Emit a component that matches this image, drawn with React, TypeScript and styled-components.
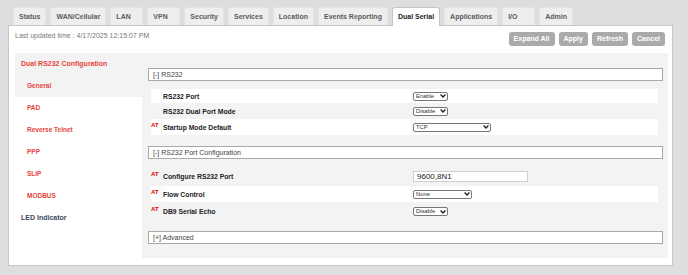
import styled, { createGlobalStyle } from "styled-components";

const GlobalStyle = createGlobalStyle`
  body {
    margin: 0;
    background: #dedede;
    font-family: "Liberation Sans", Arial, sans-serif;
  }
`;

const tabs = [
  "Status",
  "WAN/Cellular",
  "LAN",
  "VPN",
  "Security",
  "Services",
  "Location",
  "Events Reporting",
  "Dual Serial",
  "Applications",
  "I/O",
  "Admin",
];

const navItems = ["General", "PAD", "Reverse Telnet", "PPP", "SLIP", "MODBUS"];

function Chevron() {
  return (
    <svg width="6" height="4" viewBox="0 0 6 4">
      <path d="M0.6 0.6 L3 3 L5.4 0.6" fill="none" stroke="#222" strokeWidth="1.4" />
    </svg>
  );
}

function Dropdown({ value, width }: { value: string; width: number }) {
  return (
    <SelectWrap>
      <SelectBox $width={width} defaultValue={value}>
        <option>{value}</option>
      </SelectBox>
      <ChevronSpot>
        <Chevron />
      </ChevronSpot>
    </SelectWrap>
  );
}

interface RowProps {
  at?: boolean;
  label: string;
  striped?: boolean;
  height: number;
  children: React.ReactNode;
}

function Row({ at, label, striped, height, children }: RowProps) {
  return (
    <RowGrid $height={height}>
      <Cell $striped={striped}>{at && <AtMark>AT</AtMark>}</Cell>
      <LabelCell $striped={striped}>{label}</LabelCell>
      <ValueCell $striped={striped}>{children}</ValueCell>
    </RowGrid>
  );
}

function App() {
  return (
    <Page>
      <GlobalStyle />
      <TabBar>
        {tabs.map((t) => (
          <Tab key={t} $active={t === "Dual Serial"}>
            {t}
          </Tab>
        ))}
      </TabBar>
      <Panel>
        <PanelHeader>
          <Updated>Last updated time : 4/17/2025 12:15:07 PM</Updated>
          <Buttons>
            <Button>Expand All</Button>
            <Button>Apply</Button>
            <Button>Refresh</Button>
            <Button>Cancel</Button>
          </Buttons>
        </PanelHeader>
        <Body>
          <Nav>
            <NavHeader>Dual RS232 Configuration</NavHeader>
            {navItems.map((n) => (
              <NavItem key={n} $active={n === "General"}>
                {n}
              </NavItem>
            ))}
            <NavGroup>LED Indicator</NavGroup>
          </Nav>
          <Content>
            <Section>
              <SectionTitle>[-] RS232</SectionTitle>
              <Rows>
                <Row label="RS232 Port" striped height={14}>
                  <Dropdown value="Enable" width={35} />
                </Row>
                <Row label="RS232 Dual Port Mode" height={14}>
                  <Dropdown value="Disable" width={35} />
                </Row>
                <Row at label="Startup Mode Default" striped height={16}>
                  <Dropdown value="TCP" width={78} />
                </Row>
              </Rows>
            </Section>
            <Section>
              <SectionTitle>[-] RS232 Port Configuration</SectionTitle>
              <Rows $top={9}>
                <Row at label="Configure RS232 Port" height={17}>
                  <TextInput defaultValue="9600,8N1" />
                </Row>
                <Row at label="Flow Control" striped height={16}>
                  <Dropdown value="None" width={59} />
                </Row>
                <Row at label="DB9 Serial Echo" height={17}>
                  <Dropdown value="Disable" width={35} />
                </Row>
              </Rows>
            </Section>
            <SectionTitle>[+] Advanced</SectionTitle>
          </Content>
        </Body>
      </Panel>
    </Page>
  );
}

const Page = styled.div`
  padding: 7px 0 0 8px;
  width: 665px;
`;

const TabBar = styled.div`
  display: flex;
  align-items: flex-end;
  gap: 4px;
  height: 18px;
  padding-left: 5px;
  position: relative;
  z-index: 1;
`;

const Tab = styled.div<{ $active?: boolean }>`
  box-sizing: border-box;
  min-width: 33px;
  height: ${({ $active }) => ($active ? "19px" : "18px")};
  margin-bottom: ${({ $active }) => ($active ? "-1px" : "0")};
  padding: 0 5px;
  font-size: 7px;
  font-weight: bold;
  line-height: 17px;
  white-space: nowrap;
  color: ${({ $active }) => ($active ? "#222" : "#5c5c5c")};
  background: ${({ $active }) => ($active ? "#fff" : "#eeeeee")};
  border: 1px solid ${({ $active }) => ($active ? "#c4c4c4" : "#e4e4e4")};
  border-bottom: none;
  border-radius: 3px 3px 0 0;
`;

const Panel = styled.div`
  box-sizing: border-box;
  width: 665px;
  height: 241px;
  background: #fff;
  border: 1px solid #c6c6c6;
  display: flex;
  flex-direction: column;
`;

const PanelHeader = styled.div`
  box-sizing: border-box;
  height: 27px;
  padding: 5px 7px 0 6px;
  display: flex;
  justify-content: space-between;
  align-items: flex-start;
`;

const Updated = styled.div`
  font-size: 7px;
  line-height: 9px;
  color: #777;
`;

const Buttons = styled.div`
  display: flex;
  gap: 4px;
  margin-top: 1px;
`;

const Button = styled.button`
  height: 14px;
  padding: 0 5px;
  border: none;
  border-radius: 3px;
  background: #aaaaaa;
  color: #fff;
  font-family: inherit;
  font-size: 7px;
  font-weight: bold;
  line-height: 14px;
`;

const Body = styled.div`
  display: flex;
  align-items: flex-start;
  padding: 0 4px 0 6px;
`;

const Nav = styled.div`
  width: 127px;
  flex-shrink: 0;
`;

const NavHeader = styled.div`
  height: 22px;
  padding-left: 6px;
  line-height: 22px;
  background: #f3f3f3;
  color: #e5453b;
  font-size: 7px;
  font-weight: bold;
`;

const NavItem = styled.div<{ $active?: boolean }>`
  height: 22px;
  padding-left: 12px;
  line-height: 22px;
  background: ${({ $active }) => ($active ? "#f3f3f3" : "transparent")};
  color: #e5453b;
  font-size: 6.5px;
  font-weight: bold;
`;

const NavGroup = styled.div`
  height: 22px;
  padding-left: 6px;
  line-height: 21px;
  color: #3b4758;
  font-size: 7px;
  font-weight: bold;
`;

const Content = styled.div`
  flex: 1;
  background: #f3f3f3;
  padding: 15px 5px 14px 6px;
`;

const Section = styled.div`
  margin-bottom: 11px;
`;

const SectionTitle = styled.div`
  box-sizing: border-box;
  height: 13px;
  padding-left: 4px;
  background: #fff;
  border: 1px solid #a9a9a9;
  font-size: 7px;
  line-height: 11px;
  color: #444;
`;

const Rows = styled.div<{ $top?: number }>`
  display: flex;
  flex-direction: column;
  gap: 1px;
  margin: ${({ $top }) => $top ?? 8}px 5px 0 3px;
`;

const RowGrid = styled.div<{ $height: number }>`
  display: grid;
  grid-template-columns: 10px 249px 1fr;
  column-gap: 1px;
  height: ${({ $height }) => $height}px;
`;

const Cell = styled.div<{ $striped?: boolean }>`
  background: ${({ $striped }) => ($striped ? "#fff" : "transparent")};
  display: flex;
  align-items: flex-start;
`;

const LabelCell = styled(Cell)`
  align-items: center;
  padding-left: 1px;
  font-size: 6.8px;
  font-weight: bold;
  color: #222;
`;

const ValueCell = styled(Cell)`
  align-items: center;
  padding-left: 1px;
`;

const AtMark = styled.span`
  margin-top: 3px;
  font-size: 6px;
  font-weight: bold;
  line-height: 7px;
  color: #e60000;
`;

const SelectWrap = styled.span`
  position: relative;
  display: inline-flex;
`;

const SelectBox = styled.select<{ $width: number }>`
  appearance: none;
  box-sizing: border-box;
  width: ${({ $width }) => $width}px;
  height: 9px;
  margin: 0;
  padding: 0 8px 0 2px;
  border: 1px solid #777;
  border-radius: 2px;
  background: #fff;
  color: #333;
  font-family: inherit;
  font-size: 5.8px;
  line-height: 7px;
`;

const ChevronSpot = styled.span`
  position: absolute;
  right: 2px;
  top: 2.5px;
  display: flex;
  pointer-events: none;
`;

const TextInput = styled.input`
  box-sizing: border-box;
  width: 115px;
  height: 11px;
  margin: 0;
  padding: 0 3px;
  border: 1px solid #cfcfcf;
  background: #fff;
  color: #222;
  font-family: inherit;
  font-size: 8px;
`;

export default App;
